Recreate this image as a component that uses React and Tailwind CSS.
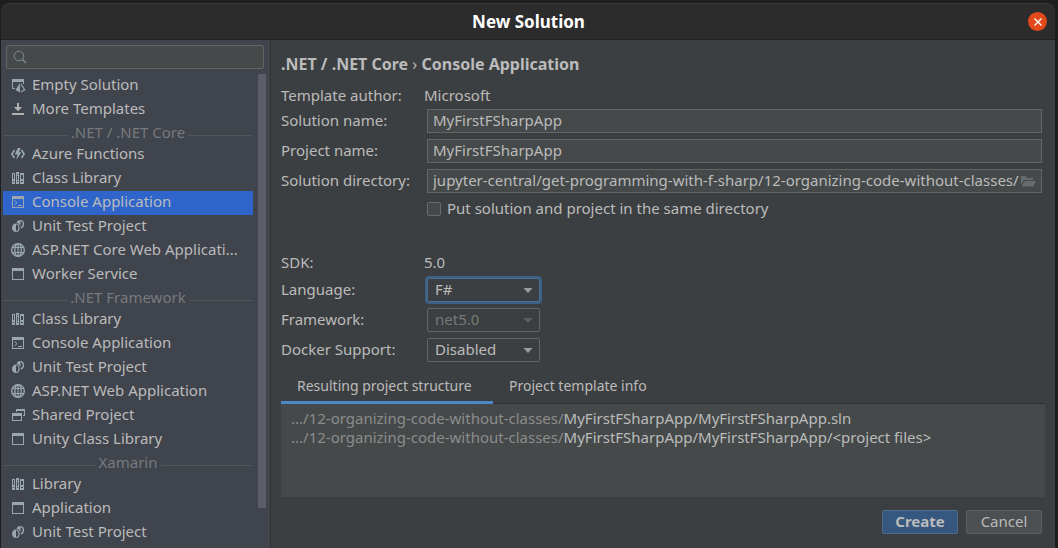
import React from "react";

function Svg({ children }) {
  return (
    <svg viewBox="0 0 16 16" className="size-4 shrink-0 text-[#9aa7b0]" fill="currentColor" aria-hidden="true">
      {children}
    </svg>
  );
}

const icons = {
  solution: (
    <Svg>
      <path d="M2 2h12v3H2zM2 5h1v6h2v1H2zM13 5h1v2h-1z" />
      <path d="M10 6v9.500L5.500 13z" />
      <path d="M11 6l4.500 7-4.500 2.500v-1.300l2.800-1.700L11 8.300z" />
    </Svg>
  ),
  download: (
    <svg viewBox="0 0 16 16" className="size-4 shrink-0 text-[#afb1b3]" fill="currentColor" aria-hidden="true">
      <path d="M7 2h2v4h3.200L8 10.200 3.800 6H7zM2 12h12v2H2z" />
    </svg>
  ),
  azure: (
    <Svg>
      <path d="M4.500 4L1.800 8l2.700 4M11.500 4l2.700 4-2.700 4" fill="none" stroke="currentColor" strokeWidth="1.600" />
      <path d="M7.700 2h3L9 6.300h2.500L6.200 14l1.300-5.500H4.800z" />
    </Svg>
  ),
  library: (
    <Svg>
      <path fillRule="evenodd" d="M2 3h3v11H2zM3 4v5h1V4zM3 11v1h1v-1zM6 2h3v12H6zM7 4v1h1V4zM7 6v4h1V6zM7 11v1h1v-1zM10 3h4v11h-4zM11 5v4h2V5zM11 11v1h2v-1z" />
    </Svg>
  ),
  console: (
    <Svg>
      <path fillRule="evenodd" d="M2 2h12v12H2zM3 5v8h10V5z" />
      <path d="M4.500 6.500L7 8.700 4.500 11" fill="none" stroke="currentColor" />
      <path d="M8 11h4v1H8z" />
    </Svg>
  ),
  test: (
    <Svg>
      <path d="M6 5.500a4 4.300 0 1 0 0 8.600z" />
      <path d="M6 6c4 .2 4 7.200 0 7.500" fill="none" stroke="currentColor" strokeWidth="1.200" />
      <path d="M10.500 2C8.300 2 6.800 3.200 6.600 4.800c2 .3 3.400 1.700 3.900 3.700z" />
      <path d="M10.500 2.600c4 .3 3.800 6.500.3 7.400" fill="none" stroke="currentColor" strokeWidth="1.300" />
    </Svg>
  ),
  globe: (
    <Svg>
      <g fill="none" stroke="currentColor" strokeWidth="1.400">
        <circle cx="8" cy="8" r="6.300" />
        <ellipse cx="8" cy="8" rx="3.200" ry="6.300" />
        <path d="M2.300 5.500h11.400M2.300 10.500h11.400M8 1.700v12.600" strokeWidth="1.200" />
      </g>
    </Svg>
  ),
  window: (
    <Svg>
      <path fillRule="evenodd" d="M2 2h12v12H2zM3 5v8h10V5z" />
    </Svg>
  ),
  shared: (
    <Svg>
      <path fillRule="evenodd" d="M2 6h10v8H2zM3 9v4h8V9z" />
      <path d="M6 2h9v7h-2V8h1V4H7v1H6z" />
    </Svg>
  ),
};

const groups = [
  { items: [["solution", "Empty Solution"], ["download", "More Templates"]] },
  {
    title: ".NET / .NET Core",
    items: [
      ["azure", "Azure Functions"],
      ["library", "Class Library"],
      ["console", "Console Application", true],
      ["test", "Unit Test Project"],
      ["globe", "ASP.NET Core Web Applicati..."],
      ["window", "Worker Service"],
    ],
  },
  {
    title: ".NET Framework",
    items: [
      ["library", "Class Library"],
      ["console", "Console Application"],
      ["test", "Unit Test Project"],
      ["globe", "ASP.NET Web Application"],
      ["shared", "Shared Project"],
      ["window", "Unity Class Library"],
    ],
  },
  {
    title: "Xamarin",
    items: [["library", "Library"], ["window", "Application"], ["test", "Unit Test Project"]],
  },
];

function Sidebar() {
  return (
    <aside className="flex w-[270px] shrink-0 flex-col border-r border-[#323232] bg-[#40444d]">
      <div className="ml-[5px] mr-1.5 mt-[5px] flex h-6 shrink-0 items-center gap-2 rounded-xs border border-[#646464] bg-[#45494a] px-[5px]">
        <svg viewBox="0 0 16 16" className="size-4 shrink-0 text-[#7c8a92]" fill="none" stroke="currentColor" aria-hidden="true">
          <circle cx="7" cy="7" r="4.800" />
          <path d="M10.500 10.500l3.500 3.500" strokeWidth="1.500" />
        </svg>
        <input type="search" aria-label="Search templates" className="min-w-0 flex-1 bg-transparent outline-none" />
      </div>
      <div className="mt-[5px] flex min-h-0 flex-1">
        <nav className="ml-0.5 min-w-0 flex-1 overflow-hidden">
          {groups.map((g, i) => (
            <section key={i}>
              {g.title && (
                <div className="flex h-[21px] items-center gap-[3px] text-[#777a7d]">
                  <span className="mt-1.5 h-px flex-1 bg-[#515658]" />
                  <h2 className="pb-0.5">{g.title}</h2>
                  <span className="mt-1.5 h-px flex-1 bg-[#515658]" />
                </div>
              )}
              {g.items.map(([icon, label, selected]) => (
                <button
                  key={label}
                  type="button"
                  aria-pressed={!!selected}
                  className={
                    selected
                      ? "flex h-6 w-full items-center gap-1.5 whitespace-nowrap bg-[#2f65ca] pb-0.5 pl-[7px] text-left"
                      : "flex h-6 w-full items-center gap-1.5 whitespace-nowrap pb-0.5 pl-[7px] text-left"
                  }
                >
                  {icons[icon]}
                  <span className="pb-0.5">{label}</span>
                </button>
              ))}
            </section>
          ))}
        </nav>
        <div className="ml-[5px] mr-1 flex w-2 shrink-0 flex-col">
          <div className="h-[434px] bg-[#5b5e66]" />
        </div>
      </div>
    </aside>
  );
}

function Row({ label, id, children }) {
  return (
    <div className="mb-1.5 flex h-6 items-center pr-[3px]">
      <label htmlFor={id} className="w-[146px] shrink-0 pb-0.5">{label}</label>
      {children}
    </div>
  );
}

function Combo({ id, options, focused, disabled }) {
  return (
    <div
      className={
        focused
          ? "relative h-6 w-[113px] rounded-xs border border-[#466d94] ring-2 ring-[#3d6185]"
          : "relative h-6 w-[113px] rounded-xs border border-[#646464]"
      }
    >
      <select
        id={id}
        disabled={disabled}
        className="h-full w-full appearance-none bg-transparent pb-0.5 pl-[7px] outline-none disabled:text-[#777777] disabled:opacity-100"
      >
        {options.map((o) => <option key={o}>{o}</option>)}
      </select>
      <svg
        viewBox="0 0 10 6"
        className={
          disabled
            ? "pointer-events-none absolute right-1.5 top-[9px] h-1.5 w-2.5 text-[#5c5e60]"
            : "pointer-events-none absolute right-1.5 top-[9px] h-1.5 w-2.5 text-[#9a9da0]"
        }
        fill="currentColor"
        aria-hidden="true"
      >
        <path d="M.5 0h9L5 5z" />
      </svg>
    </div>
  );
}

function Main() {
  return (
    <main className="flex min-w-0 flex-1 flex-col bg-[#3c3f41] px-2.5">
      <h2 className="mt-3 flex h-6 items-center text-base font-bold">
        <span>.NET / .NET Core <span className="font-normal">›</span> Console Application</span>
      </h2>
      <div className="mt-2 flex h-6 items-center pb-0.5">
        <span className="w-[143px] shrink-0">Template author:</span>
        <span>Microsoft</span>
      </div>
      <div className="mt-px">
        <Row label="Solution name:" id="solution">
          <input id="solution" defaultValue="MyFirstFSharpApp" className="h-6 min-w-0 flex-1 border border-[#646464] bg-[#45494a] px-[5px] pb-0.5 outline-none" />
        </Row>
        <Row label="Project name:" id="project">
          <input id="project" defaultValue="MyFirstFSharpApp" className="h-6 min-w-0 flex-1 border border-[#646464] bg-[#45494a] px-[5px] pb-0.5 outline-none" />
        </Row>
        <Row label="Solution directory:" id="directory">
          <div className="flex h-6 min-w-0 flex-1 items-center border border-[#646464] bg-[#45494a] px-[5px]">
            <input
              id="directory"
              defaultValue="jupyter-central/get-programming-with-f-sharp/12-organizing-code-without-classes/"
              className="min-w-0 flex-1 bg-transparent pb-0.5 outline-none"
            />
            <button type="button" aria-label="Browse">
              <svg viewBox="0 0 16 16" className="size-4 text-[#656b6f]" fill="currentColor" aria-hidden="true">
                <path d="M1 3h4.500l1.500 2h6v2H4l-3 5z" />
                <path d="M4.500 8H16l-2.500 5.500H1.500z" />
              </svg>
            </button>
          </div>
        </Row>
      </div>
      <label className="ml-[146px] mt-[-2px] flex h-6 items-center gap-1.5">
        <input type="checkbox" className="size-3.5 appearance-none rounded-xs border border-[#6b6b6b] bg-[#43494a] checked:bg-[#6b6b6b]" />
        <span className="pb-0.5">Put solution and project in the same directory</span>
      </label>
      <div className="mt-[30px] flex h-6 items-center pb-0.5">
        <span className="w-[143px] shrink-0">SDK:</span>
        <span>5.0</span>
      </div>
      <div className="mt-[3px]">
        <Row label="Language:" id="language"><Combo id="language" options={["F#", "C#", "VB"]} focused /></Row>
        <Row label="Framework:" id="framework"><Combo id="framework" options={["net5.0"]} disabled /></Row>
        <Row label="Docker Support:" id="docker"><Combo id="docker" options={["Disabled", "Linux", "Windows"]} /></Row>
      </div>
      <div role="tablist" className="mt-1 flex h-8 border-b border-[#323232] text-[14px]">
        <button type="button" role="tab" aria-selected="true" className="-mb-px w-[212px] border-b-3 border-[#4a88c7] px-4 pb-0.5 text-left">
          Resulting project structure
        </button>
        <button type="button" role="tab" aria-selected="false" className="px-4 pb-1">Project template info</button>
      </div>
      <div role="tabpanel" className="h-[93px] bg-[#45494a] px-2.5 pt-[5px] leading-[19px]">
        <p><span className="text-[#8c8c8c]">.../12-organizing-code-without-classes/</span>MyFirstFSharpApp/MyFirstFSharpApp.sln</p>
        <p><span className="text-[#8c8c8c]">.../12-organizing-code-without-classes/</span>MyFirstFSharpApp/MyFirstFSharpApp/&lt;project files&gt;</p>
      </div>
      <div className="mt-[13px] flex justify-end gap-2 pr-[3px]">
        <button type="button" className="flex h-6 w-[76px] items-center justify-center rounded-xs border border-[#4c708c] bg-[#365880] pb-0.5 font-bold">Create</button>
        <button type="button" className="flex h-6 w-[76px] items-center justify-center rounded-xs border border-[#5e6060] bg-[#4c5052] pb-0.5">Cancel</button>
      </div>
    </main>
  );
}

export default function App() {
  return (
    <div className="flex h-screen flex-col overflow-hidden bg-[#1e1e1e] pl-px pr-[3px] pt-[3px] font-['Noto_Sans',sans-serif] text-[15px] leading-5 text-[#bbbbbb]">
      <header className="flex h-[37px] shrink-0 items-center rounded-t-lg border-b border-[#232323] border-t border-t-[#3a3a3a] bg-[#2c2c2c] px-2">
        <span className="w-5" />
        <h1 className="flex-1 text-center text-[17px] font-bold text-white">New Solution</h1>
        <button type="button" aria-label="Close" className="flex size-[19px] items-center justify-center rounded-full bg-[#e2491a] text-white">
          <svg viewBox="0 0 10 10" className="size-2.5" stroke="currentColor" strokeWidth="1.400" aria-hidden="true">
            <path d="M1.500 1.500l7 7M8.500 1.500l-7 7" />
          </svg>
        </button>
      </header>
      <div className="flex min-h-0 flex-1">
        <Sidebar />
        <Main />
      </div>
    </div>
  );
}
